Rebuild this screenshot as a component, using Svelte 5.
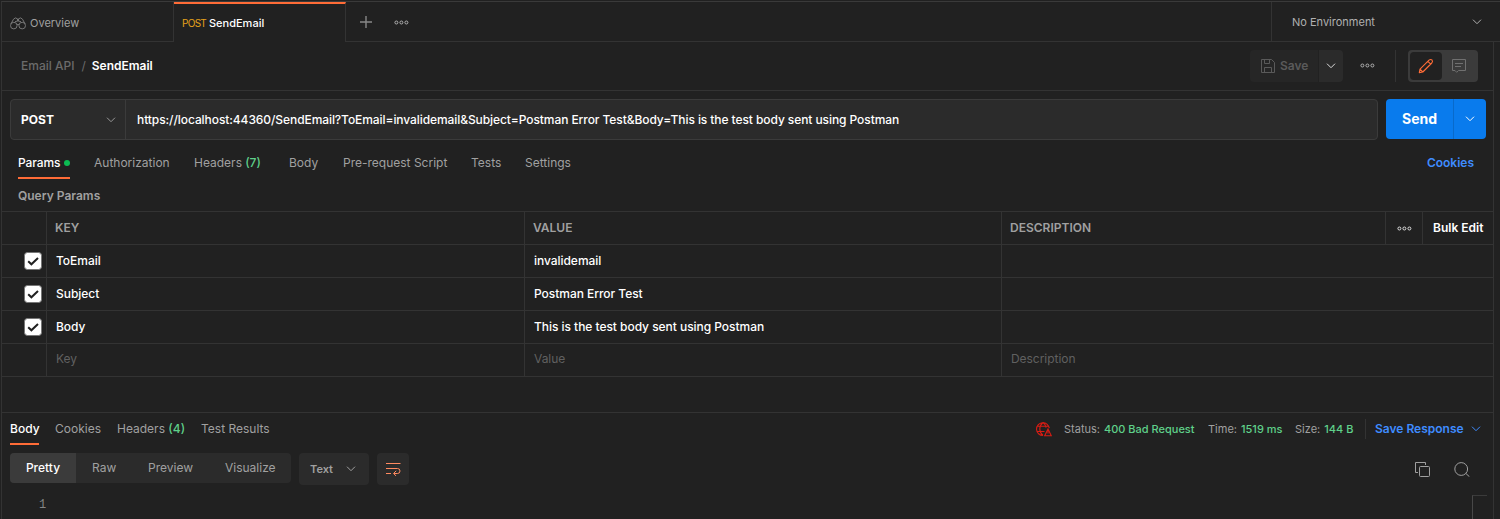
<script>
  const requestTabs = ['Authorization', 'Headers', 'Body', 'Pre-request Script', 'Tests', 'Settings'];
  const params = [
    { key: 'ToEmail', value: 'invalidemail' },
    { key: 'Subject', value: 'Postman Error Test' },
    { key: 'Body', value: 'This is the test body sent using Postman' }
  ];
</script>

{#snippet chevron()}
  <svg class="chevron" width="10" height="6" viewBox="0 0 10 6" fill="none" stroke="currentColor"><path d="M1 .7 5 4.7 9 .7" /></svg>
{/snippet}

{#snippet dots()}
  <svg class="dots" width="15" height="5" viewBox="0 0 15 5" fill="none" stroke="currentColor">
    <circle cx="2.4" cy="2.5" r="1.5" /><circle cx="7.4" cy="2.5" r="1.5" /><circle cx="12.4" cy="2.5" r="1.5" />
  </svg>
{/snippet}

<div class="app">
  <div class="tabbar">
    <div class="tab">
      <svg width="16" height="13" viewBox="0 0 16 13" fill="none" stroke="currentColor">
        <circle cx="3.8" cy="8.6" r="3.3" /><circle cx="12.2" cy="8.6" r="3.3" />
        <path d="M.9 7 3.5 2.2Q5.2-.2 7.5 1.8V4M15.1 7 12.5 2.2Q10.8-.2 8.5 1.8V4M7 7.8Q8 6.8 9 7.8M5 4.7Q8 3 11 4.7" />
      </svg>
      <span>Overview</span>
    </div>
    <div class="tab active"><span class="verb">POST</span><span class="name">SendEmail</span></div>
    <div class="actions">
      <svg width="12" height="12" viewBox="0 0 12 12" stroke="currentColor" stroke-width="1.4"><path d="M6 0V12M0 6H12" /></svg>
      {@render dots()}
    </div>
    <div class="env"><span>No Environment</span>{@render chevron()}</div>
  </div>

  <div class="body">
    <div class="crumbs">
      <span class="folder">Email API</span><span class="slash">/</span><span class="current">SendEmail</span>
      <div class="save">
        <svg width="14" height="14" viewBox="0 0 14 14" fill="none" stroke="currentColor"><path d="M.5.5H10.5L13.5 3.5V13.5H.5ZM3.5.5V4.5H8.5V.5M3.5 13.5V8.5H10.5V13.5" /></svg>
        <span>Save</span>
      </div>
      <div class="save-more">{@render chevron()}</div>
      <div class="more">{@render dots()}</div>
      <div class="toggle">
        <div class="on">
          <svg width="16" height="16" viewBox="0 0 16 16" fill="none" stroke="currentColor" stroke-width="1.1" stroke-linejoin="round"><path d="M1.3 14.6 2 11.2 11 2.2Q12.6.8 14 2 15.2 3.4 13.8 5L4.8 14ZM9.9 3.3 12.7 6.1M2 11.2 4.8 14" /></svg>
        </div>
        <div class="off">
          <svg width="14" height="14" viewBox="0 0 14 14" fill="none" stroke="currentColor"><path d="M.5.5H13.5V11.5H6.5L4.7 13.3 3 11.5H.5ZM3 4.5H11M3 7.5H9" /></svg>
        </div>
      </div>
    </div>

    <div class="request">
      <div class="url">
        <div class="method"><span>POST</span>{@render chevron()}</div>
        <div class="address">https://localhost:44360/SendEmail?ToEmail=invalidemail&amp;Subject=Postman Error Test&amp;Body=This is the test body sent using Postman</div>
      </div>
      <div class="send"><span>Send</span><div>{@render chevron()}</div></div>
    </div>

    <div class="req-tabs">
      <div class="selected"><span>Params</span><i></i></div>
      {#each requestTabs as tab}
        <span class="item">{tab}{#if tab === 'Headers'}<b>&nbsp;(7)</b>{/if}</span>
      {/each}
      <span class="cookies">Cookies</span>
    </div>
    <div class="heading">Query Params</div>

    <div class="table">
      <div class="row head">
        <div></div>
        <div>KEY</div>
        <div>VALUE</div>
        <div>DESCRIPTION</div>
        <div class="opts">{@render dots()}</div>
        <div class="bulk">Bulk Edit</div>
      </div>
      {#each params as p}
        <div class="row">
          <div class="check">
            <svg width="18" height="18" viewBox="0 0 18 18"><rect x=".5" y=".5" width="17" height="17" rx="3" fill="#fff" stroke="#777" /><path d="M4.2 9.2 7.4 12.3 14 6" fill="none" stroke="#212121" stroke-width="2" /></svg>
          </div>
          <div>{p.key}</div>
          <div>{p.value}</div>
          <div></div>
        </div>
      {/each}
      <div class="row hint"><div></div><div>Key</div><div>Value</div><div>Description</div></div>
    </div>

    <div class="response">
      <div class="res-tabs">
        <span class="selected">Body</span>
        <span>Cookies</span>
        <span>Headers <b>(4)</b></span>
        <span>Test Results</span>
        <div class="meta">
          <svg width="16" height="15" viewBox="0 0 16 15" fill="none" stroke="currentColor" stroke-width="1.1"><path d="M7 13.5A6.4 6.4 0 1 1 13.3 6.2M7 .5Q3.8 3 3.8 7T7 13.5M7 .5Q9.7 2.3 10.1 5.6M1.3 4.3H12.6M1 9.5H8.5M12 7 8.7 13.7H15.3ZM12 9.3V11.5" /></svg>
          <span class="s1">Status:<b>400 Bad Request</b></span>
          <span class="s2">Time:<b>1519 ms</b></span>
          <span class="s3">Size:<b>144 B</b></span>
        </div>
        <div class="save-res"><span>Save Response</span>{@render chevron()}</div>
      </div>
      <div class="tools">
        <div class="segments">
          <span class="on">Pretty</span><span class="raw">Raw</span><span class="preview">Preview</span><span class="visual">Visualize</span>
        </div>
        <div class="format"><span>Text</span>{@render chevron()}</div>
        <div class="wrap">
          <svg width="15" height="14" viewBox="0 0 15 14" fill="none" stroke="currentColor"><path d="M0 1.5H14.5M0 6.5H11.5Q14 6.5 14 9T11.5 11.5H8M0 11.5H5M10.2 8.8 7.5 11.5 10.2 14" /></svg>
        </div>
        <div class="right">
          <svg width="15" height="15" viewBox="0 0 15 15" fill="none" stroke="currentColor"><path d="M3 10.5H.5V.5H10.5V3" /><rect x="4.5" y="4.5" width="10" height="10" rx="1" /></svg>
          <svg width="16" height="15" viewBox="0 0 16 15" fill="none" stroke="currentColor"><circle cx="7.2" cy="7" r="6.4" /><path d="M11.7 11.3 15.4 14.7" /></svg>
        </div>
      </div>
      <div class="editor"><span>1</span><div class="corner"></div></div>
    </div>
  </div>
</div>

<style>
  :global(body) { margin: 0; background: #212121; }
  .app, .app * { box-sizing: border-box; }
  .app {
    width: 1500px; height: 519px; overflow: hidden; padding-top: 1px;
    font: 12px/16px Inter, sans-serif; color: #a0a0a0; background: #212121;
    display: flex; flex-direction: column; white-space: nowrap;
  }
  svg { display: block; flex: none; }
  b { font-weight: 500; color: #5fd08a; }
  .tabbar { display: flex; height: 41px; flex: none; border-top: 1px solid #3a3a3a; margin-left: 1px; border-left: 1px solid #333; font-size: 11px; }
  .tab { width: 172px; border-right: 1px solid #333; border-bottom: 1px solid #333; display: flex; align-items: center; padding: 3px 0 0 8px; }
  .tab svg { color: #777; margin-right: 4px; }
  .tab.active { border-bottom: 0; border-top: 2px solid #ff6c37; padding: 0 0 0 8px; }
  .verb { color: #e5a11b; font-size: 10px; width: 27px; letter-spacing: -.7px; }
  .name { color: #fff; font-weight: 500; }
  .actions { flex: 1; border-bottom: 1px solid #333; display: flex; align-items: center; gap: 22px; padding: 1px 0 0 14px; color: #b0b0b0; }
  .actions svg:first-child { color: #888; }
  .env { width: 229px; border-left: 1px solid #333; border-bottom: 1px solid #333; display: flex; align-items: center; justify-content: space-between; padding: 1px 18px 0 20px; }
  .env .chevron, .env { color: #b0b0b0; }
  .body { width: 1493px; margin-left: 1px; flex: 1; border-left: 1px solid #333; border-right: 1px solid #333; display: flex; flex-direction: column; }
  .crumbs { height: 49px; flex: none; border-bottom: 1px solid #333; display: flex; align-items: center; padding: 0 15px 0 19px; }
  .folder { color: #6b6b6b; font-weight: 500; }
  .slash { color: #6b6b6b; margin: 0 6px 0 7px; }
  .current { color: #fff; font-weight: 600; }
  .save { margin-left: auto; width: 68px; height: 32px; background: #262626; border-radius: 4px 0 0 4px; display: flex; align-items: center; gap: 5px; padding-left: 11px; color: #5a5a5a; font-weight: 600; }
  .save-more { width: 24px; height: 32px; margin-left: 1px; border-radius: 0 4px 4px 0; background: #2b2b2b; display: grid; place-items: center; color: #ddd; }
  .more { width: 53px; height: 32px; border-right: 1px solid #333; padding: 13px 0 0 17px; color: #b0b0b0; }
  .toggle { width: 70px; height: 32px; margin-left: 12px; border-radius: 4px; background: #3b3b3b; padding: 2px; display: flex; }
  .toggle div { display: grid; place-items: center; }
  .on { color: #ff6c37; }
  .toggle .on { width: 32px; background: #212121; border-radius: 4px; }
  .off { width: 34px; color: #707070; }
  .request { display: flex; padding: 8px 6px 0 8px; gap: 8px; }
  .url { width: 1368px; height: 41px; border: 1px solid #3b3b3b; border-radius: 4px; background: #2b2b2b; display: flex; align-items: center; }
  .method { width: 115px; height: 39px; border-right: 1px solid #3b3b3b; display: flex; align-items: center; justify-content: space-between; padding: 0 9px 0 10px; color: #fff; font-weight: 700; }
  .method .chevron { color: #999; }
  .address { color: #fff; padding-left: 11px; font-weight: 500; letter-spacing: -.079px; }
  .send { width: 100px; height: 40px; border-radius: 4px; background: #097bed; color: #fff; display: flex; align-items: center; font-size: 14px; font-weight: 700; }
  .send span { width: 67px; text-align: center; }
  .send div { height: 40px; width: 33px; border-left: 1px solid #086acb; display: grid; place-items: center; }
  .req-tabs { height: 39px; display: grid; grid-template-columns: 76px 100px 95px 54px 128px 54px 1fr auto; padding: 15px 19px 0 16px; }
  .selected { color: #fff; font-weight: 500; }
  .req-tabs .selected { width: 52px; height: 24px; border-bottom: 2px solid #ff6c37; display: flex; justify-content: space-between; }
  .req-tabs .selected span { letter-spacing: -.1px; }
  .selected i { flex: none; width: 6px; height: 6px; margin-top: 5px; border-radius: 50%; background: #0cbb52; }
  .cookies { color: #3f8cff; font-weight: 600; }
  .heading { height: 32px; padding: 9px 0 0 16px; font-weight: 600; }
  .table { border-top: 1px solid #333; }
  .row { height: 33px; border-bottom: 1px solid #333; display: grid; grid-template-columns: 45px 478px 477px 1fr; color: #fff; font-weight: 500; letter-spacing: -.04px; }
  .row > div { border-right: 1px solid #333; padding: 8px 0 0 9px; }
  .row > div:last-child { border-right: 0; }
  .row.head { grid-template-columns: 45px 478px 477px 384px 37px 1fr; color: #a0a0a0; font-weight: 600; letter-spacing: 0; }
  .row.head > div { padding-left: 8px; }
  .row.head > .opts { padding: 14px 0 0 11px; color: #ddd; }
  .row.head > .bulk { color: #fff; padding-left: 10px; }
  .row > .check { padding: 7px 0 0 22px; }
  .row.hint { color: #606060; font-weight: 400; }
  .row.hint > div { padding-top: 7px; }
  .response { flex: 1; margin-top: 35px; border-top: 1px solid #333; }
  .res-tabs { height: 40px; display: grid; grid-template-columns: 45px 62px 84px 1fr auto auto; padding: 8px 12px 0 8px; }
  .res-tabs .selected { width: 29px; height: 24px; border-bottom: 2px solid #ff6c37; }
  .meta { display: flex; width: 329px; font-size: 11px; }
  .meta svg { color: #d91c13; margin: 1px 12px 0 0; }
  .meta b { margin-left: 4px; }
  .s1 { width: 144px; } .s2 { width: 87px; }
  .save-res { height: 20px; margin-top: -2px; width: 116px; border-left: 1px solid #333; padding-left: 9px; display: flex; align-items: center; justify-content: space-between; color: #3f8cff; font-weight: 600; }
  .tools { display: flex; padding: 0 23px 0 8px; gap: 8px; height: 33px; }
  .segments { width: 281px; height: 30px; border-radius: 4px; background: #2b2b2b; display: flex; align-items: center; overflow: hidden; }
  .segments .on { width: 66px; height: 30px; padding-top: 7px; text-align: center; color: #fff; background: #3b3b3b; font-weight: 500; }
  .raw { width: 56px; margin-left: 16px; } .preview { width: 77px; }
  .format { width: 70px; height: 32px; border-radius: 4px; background: #2b2b2b; display: flex; align-items: center; justify-content: space-between; padding: 0 13px 0 11px; font-weight: 600; font-size: 11px; }
  .wrap { width: 32px; height: 32px; border-radius: 4px; background: #2b2b2b; display: grid; place-items: center; color: #ff8a60; }
  .right { margin-left: auto; display: flex; align-items: center; gap: 24px; height: 32px; }
  .editor { display: flex; justify-content: space-between; padding: 9px 6px 0 37px; font: 12px/18px "Liberation Mono", monospace; color: #858585; }
  .editor span { padding-top: 1px; }
  .corner { width: 15px; height: 25px; border-top: 1px solid #3b3b3b; border-left: 1px solid #484848; }
</style>
